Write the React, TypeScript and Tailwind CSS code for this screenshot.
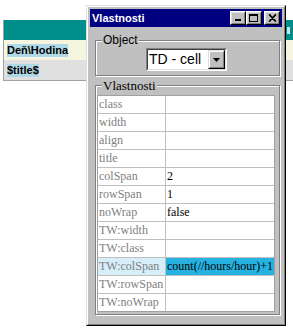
import React from 'react';

const props: [string, string][] = [
  ['class', ''],
  ['width', ''],
  ['align', ''],
  ['title', ''],
  ['colSpan', '2'],
  ['rowSpan', '1'],
  ['noWrap', 'false'],
  ['TW:width', ''],
  ['TW:class', ''],
  ['TW:colSpan', 'count(//hours/hour)+1'],
  ['TW:rowSpan', ''],
  ['TW:noWrap', ''],
];

const raised =
  'border border-t-white border-l-white border-r-black border-b-black';
const raisedInner =
  'border border-t-[#dfdfdf] border-l-[#dfdfdf] border-r-[#808080] border-b-[#808080] bg-[#c0c0c0]';

const TitleButton = ({ children }: { children: React.ReactNode }) => (
  <div className={`w-[16px] h-[14px] ${raised}`}>
    <div className={`w-full h-full flex items-center justify-center ${raisedInner}`}>
      {children}
    </div>
  </div>
);

const PageTable = () => (
  <div className="pt-[20px] pl-[3px]">
    <div className="w-[290px] border-l border-b border-[#a0a0a0] font-['Liberation_Sans',sans-serif] text-[11px] font-bold">
      <div className="h-[20px] bg-[#008e8a] flex items-center justify-end">
        <div className="w-[3px] h-[7px] bg-[#c9e6e4] mr-[3px]" />
      </div>
      <div className="h-[20px] bg-[#f5f5e0] flex items-center pl-[3px]">
        <span className="bg-[#b0d9e8] h-[13px] leading-[13px] text-black">Deň\Hodina</span>
      </div>
      <div className="h-[20px] bg-[#e0e0e0] flex items-center pl-[3px]">
        <span className="bg-[#b0d9e8] h-[13px] leading-[13px] text-black">$title$</span>
      </div>
    </div>
  </div>
);

const PropertyWindow = () => (
  <div className="absolute left-[86px] top-[5px] w-[200px] h-[321px] bg-[#c0c0c0] border border-t-[#dfdfdf] border-l-[#dfdfdf] border-r-black border-b-black">
    <div className="h-full border border-t-white border-l-white border-r-[#808080] border-b-[#808080] p-[2px] flex flex-col">
      {/* title bar */}
      <div className="h-[18px] bg-[#000080] flex items-center justify-between pl-[2px] pr-[2px]">
        <span className="text-white font-bold text-[11px] font-['Liberation_Sans',sans-serif]">Vlastnosti</span>
        <div className="flex items-center">
          <TitleButton>
            <svg width="8" height="8" viewBox="0 0 8 8"><rect x="1" y="5" width="6" height="2" fill="black" /></svg>
          </TitleButton>
          <TitleButton>
            <svg width="10" height="9" viewBox="0 0 10 9">
              <rect x="0.5" y="0.5" width="8" height="7" fill="none" stroke="black" />
              <rect x="0" y="0" width="9" height="2" fill="black" />
            </svg>
          </TitleButton>
          <div className="ml-[2px]">
            <TitleButton>
              <svg width="9" height="8" viewBox="0 0 9 8">
                <path d="M1 0.5 L7.5 7.5 M1.5 0.5 L8 7.5 M7.5 0.5 L1 7.5 M8 0.5 L1.5 7.5" stroke="black" strokeWidth="1.2" />
              </svg>
            </TitleButton>
          </div>
        </div>
      </div>

      {/* Object group */}
      <fieldset className="mt-[6px] ml-[5px] mr-[2px] border border-[#808080] shadow-[inset_1px_1px_0_#fff,1px_1px_0_#fff]">
        <legend className="ml-[6px] px-[1px] bg-[#c0c0c0] text-[12px] leading-[14px] text-black font-['Liberation_Sans',sans-serif]">Object</legend>
        <div className="ml-[50px] mt-[1px] mb-[4px] w-[81px] h-[23px] border border-t-[#808080] border-l-[#808080] border-r-white border-b-white">
          <div className="h-full border border-t-[#404040] border-l-[#404040] border-r-[#dfdfdf] border-b-[#dfdfdf] bg-white flex items-center">
            <span className="flex-1 pl-[1px] text-[14px] leading-[19px] text-black font-['Liberation_Sans',sans-serif] whitespace-nowrap">TD - cell</span>
            <div className="w-[17px] h-[19px] border border-t-[#dfdfdf] border-l-[#dfdfdf] border-r-black border-b-black">
              <div className="w-full h-full flex items-center justify-center border border-t-white border-l-white border-r-[#808080] border-b-[#808080] bg-[#c0c0c0]">
                <svg width="7" height="4" viewBox="0 0 7 4"><path d="M0 0 H7 L3.5 4 Z" fill="black" /></svg>
              </div>
            </div>
          </div>
        </div>
      </fieldset>

      {/* Vlastnosti group */}
      <fieldset className="mt-[2px] ml-[5px] mr-[2px] border border-[#808080] shadow-[inset_1px_1px_0_#fff,1px_1px_0_#fff]">
        <legend className="ml-[6px] px-[1px] bg-[#c0c0c0] text-[13px] leading-[15px] text-black font-['Liberation_Serif',serif]">Vlastnosti</legend>
        <div className="mt-[2px] ml-[1px] mr-[4px] mb-[2px] grid grid-cols-[67px_1fr] gap-px bg-[#c0c0c0] border border-[#a0a0a0] font-['Liberation_Serif',serif] text-[12px] leading-[17px]">
          {props.map(([name, value]) => {
            const active = name === 'TW:colSpan';
            return (
              <React.Fragment key={name}>
                <div className={`h-[17px] pl-[1px] whitespace-nowrap text-[#808080] ${active ? 'bg-[#d6eef8]' : 'bg-white'}`}>{name}</div>
                <div className={`h-[17px] pl-[1px] whitespace-nowrap text-black ${active ? 'bg-[#25b2e0]' : 'bg-white'}`}>{value}</div>
              </React.Fragment>
            );
          })}
        </div>
      </fieldset>
    </div>
  </div>
);

export default function App() {
  return (
    <div className="relative w-[293px] h-[329px] bg-white overflow-hidden">
      <PageTable />
      <PropertyWindow />
    </div>
  );
}
